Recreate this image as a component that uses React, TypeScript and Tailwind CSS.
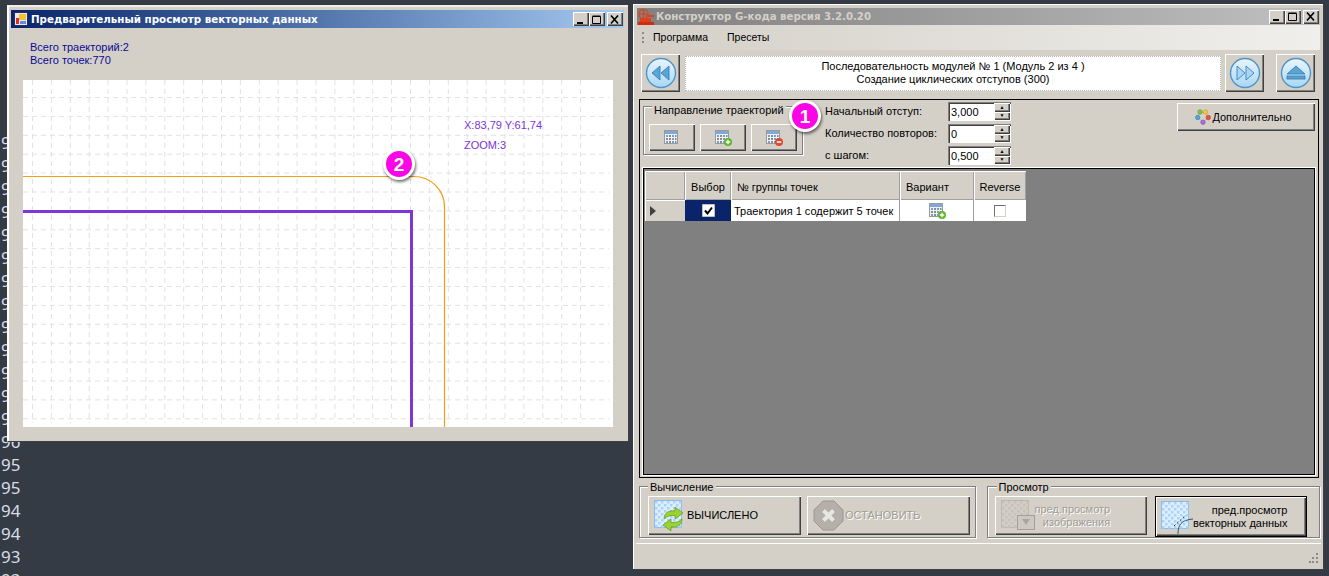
import type { ReactNode } from "react";

const raised =
  "bg-[#d4d0c8] shadow-[inset_1px_1px_0_#ffffff,inset_-1px_-1px_0_#404040,inset_-2px_-2px_0_#808080]";
const uiFont = "font-['Liberation_Sans',Arial,sans-serif] text-[11px] leading-[13px]";

const lineNumbers = ["99", "99", "99", "98", "98", "98", "98", "97", "97", "97", "97", "96", "96", "96", "95", "95", "94", "94", "93", "93", "92"];

function WinButton({ kind }: { kind: "min" | "max" | "close" }) {
  return (
    <div className={`${raised} w-[16px] h-[14px] flex items-center justify-center`}>
      <svg width="10" height="9" viewBox="0 0 10 9">
        {kind === "min" && <rect x="1" y="7" width="6" height="2" fill="#000" />}
        {kind === "max" && <path d="M0.5 1.5h8v7h-8z M0.5 1h8" fill="none" stroke="#000" />}
        {kind === "close" && <path d="M1 0.5l7 8M8 0.5l-7 8" stroke="#000" strokeWidth="1.6" />}
      </svg>
    </div>
  );
}

function WinControls() {
  return (
    <div className="flex items-center mr-[1px]">
      <WinButton kind="min" />
      <WinButton kind="max" />
      <div className="w-[2px]" />
      <WinButton kind="close" />
    </div>
  );
}

function AppIcon() {
  return (
    <svg width="14" height="14" viewBox="0 0 14 14" className="shrink-0">
      <rect x="0.5" y="0.5" width="13" height="13" fill="#e8e8f0" stroke="#23305f" />
      <rect x="2" y="6" width="3" height="6" fill="#d8322a" />
      <rect x="5" y="2" width="7" height="6" fill="#f4c430" />
      <rect x="6" y="9" width="6" height="3" fill="#5b8fd8" />
    </svg>
  );
}

function GcodeIcon() {
  return (
    <svg width="18" height="18" viewBox="0 0 18 18" className="shrink-0">
      <circle cx="6.5" cy="6" r="4.6" fill="none" stroke="#e0401a" strokeWidth="1.1" />
      <path d="M6.5 2v8M2.5 6h8" stroke="#e0401a" strokeWidth="1.2" />
      <rect x="9" y="7" width="8" height="2" fill="#e0401a" />
      <rect x="3" y="10" width="11" height="4" fill="#e0401a" />
      <rect x="1" y="14" width="16" height="3" fill="#c8300f" />
    </svg>
  );
}

function TableIcon({ badge }: { badge?: "plus" | "minus" }) {
  return (
    <svg width="20" height="18" viewBox="0 0 20 18">
      <rect x="2.5" y="1.5" width="13" height="13" fill="#f2f2f2" stroke="#9a9a9a" />
      <rect x="3" y="2" width="12" height="3" fill="#7fa8d8" />
      {[6, 9, 12].map((y) => (
        <g key={y}>
          <rect x="4" y={y} width="2" height="2" fill={y === 9 ? "#8a8a8a" : "#6f9fd8"} />
          <rect x="7" y={y} width="2" height="2" fill="#8a8a8a" />
          <rect x="10" y={y} width="2" height="2" fill="#6f9fd8" />
          <rect x="13" y={y} width="1.5" height="2" fill="#8a8a8a" />
        </g>
      ))}
      {badge === "plus" && (
        <g>
          <circle cx="15" cy="13" r="4" fill="#5fb52a" />
          <path d="M12.8 13h4.4M15 10.8v4.4" stroke="#fff" strokeWidth="1.4" />
        </g>
      )}
      {badge === "minus" && (
        <g>
          <circle cx="15" cy="13" r="4" fill="#e0472e" />
          <path d="M12.8 13h4.4" stroke="#fff" strokeWidth="1.6" />
        </g>
      )}
    </svg>
  );
}

function NavIcon({ kind }: { kind: "back" | "next" | "eject" }) {
  return (
    <svg width="32" height="32" viewBox="0 0 32 32">
      <defs>
        <linearGradient id={`nav-${kind}`} x1="0" y1="0" x2="0" y2="1">
          <stop offset="0" stopColor="#eaf5fd" />
          <stop offset="1" stopColor="#a9d6f5" />
        </linearGradient>
      </defs>
      <circle cx="16" cy="16" r="14.5" fill={`url(#nav-${kind})`} stroke="#4f94c8" strokeWidth="1.4" />
      {kind === "back" && (
        <path d="M15 9v14l-8-7zM24 9v14l-8-7z" fill="#5aa5d8" stroke="#2f78ad" strokeWidth="0.8" />
      )}
      {kind === "next" && (
        <path d="M8 9v14l8-7zM17 9v14l8-7z" fill="#a9d6f5" stroke="#2f78ad" strokeWidth="0.8" />
      )}
      {kind === "eject" && (
        <g fill="#5aa5d8" stroke="#2f78ad" strokeWidth="0.8">
          <path d="M16 9l9 8H7z" />
          <rect x="7" y="19" width="18" height="3" />
        </g>
      )}
    </svg>
  );
}

function DotsIcon() {
  return (
    <svg width="16" height="16" viewBox="0 0 16 16" className="shrink-0">
      <path d="M5 3.5L2.5 8M5 3.5h5M10 3.5l3.5 5M2.5 8l5 5M13.5 8.5L7.5 13" stroke="#b0b0b0" fill="none" />
      <circle cx="5" cy="3" r="2.2" fill="#8bc34a" stroke="#5d8f2a" strokeWidth="0.6" />
      <circle cx="10.5" cy="3" r="2.2" fill="#f2c744" stroke="#c79a1a" strokeWidth="0.6" />
      <circle cx="2.7" cy="8.5" r="2.2" fill="#5aa5e0" stroke="#2f78ad" strokeWidth="0.6" />
      <circle cx="13.3" cy="8.5" r="2.2" fill="#e8543c" stroke="#b23520" strokeWidth="0.6" />
      <circle cx="8" cy="13.2" r="2.2" fill="#a874d8" stroke="#7a48ad" strokeWidth="0.6" />
    </svg>
  );
}

function Checker({ muted, children }: { muted?: boolean; children?: ReactNode }) {
  const a = muted ? "#d2cec7" : "#dceefd";
  const b = muted ? "#c6c2bb" : "#a9d4f8";
  const cells = [1, 4, 7, 10, 13, 16, 19, 22, 25];
  return (
    <svg width="34" height="34" viewBox="0 0 34 34" className="shrink-0 mt-[4px]">
      <rect x="0.5" y="0.5" width="27" height="27" fill={a} stroke={muted ? "#bcb8b0" : "#8cbcec"} />
      {cells.map((y, r) =>
        cells.map((x, c) =>
          (r + c) % 2 === 0 ? <rect key={`${x}-${y}`} x={x} y={y} width="2.5" height="2.5" fill={b} /> : null,
        ),
      )}
      {children}
    </svg>
  );
}

function GroupBox({
  title,
  className,
  legendClass,
  children,
}: {
  title: string;
  className: string;
  legendClass: string;
  children: ReactNode;
}) {
  return (
    <div className={`relative border border-[#808080] shadow-[inset_1px_1px_0_#ffffff,1px_1px_0_#ffffff] ${className}`}>
      <span className={`absolute bg-[#d4d0c8] px-[2px] text-black ${legendClass}`}>{title}</span>
      {children}
    </div>
  );
}

function SpinBox({ value }: { value: string }) {
  return (
    <div className="w-[63px] h-[19px] bg-white flex items-center shadow-[inset_1px_1px_0_#808080,inset_2px_2px_0_#404040,inset_-1px_-1px_0_#ffffff]">
      <span className="flex-1 pl-[3px] pt-[1px] text-[11px] text-black">{value}</span>
      <div className="w-[16px] h-[17px] mr-[1px] flex flex-col">
        <div className={`${raised} flex-1 flex items-center justify-center text-[5px] leading-none text-black`}>▲</div>
        <div className={`${raised} flex-1 flex items-center justify-center text-[5px] leading-none text-black`}>▼</div>
      </div>
    </div>
  );
}

function Badge({ n }: { n: string }) {
  return (
    <div className="w-[32px] h-[32px] rounded-full bg-[#fa05e6] border-[3px] border-white shadow-[1px_2px_3px_rgba(0,0,0,0.55)] flex items-center justify-center text-white font-['Liberation_Sans',sans-serif] font-bold text-[19px] leading-none">
      {n}
    </div>
  );
}

function HeaderCell({ className, children }: { className: string; children?: ReactNode }) {
  return (
    <div className={`${className} h-[29px] pt-[3px] flex items-center bg-[#d4d0c8] shadow-[inset_1px_1px_0_#ffffff,inset_-1px_-1px_0_#a0a0a0] text-black`}>
      {children}
    </div>
  );
}

function PreviewWindow() {
  const xs = Array.from({ length: 30 }, (_, i) => 9.5 + i * 18.9);
  const ys = Array.from({ length: 18 }, (_, i) => 17.5 + i * 18.9);
  return (
    <section className={`absolute left-[7px] top-[5px] w-[621px] h-[436px] flex flex-col p-[4px] bg-[#d4d0c8] border-t-2 border-l-2 border-t-[#eeeeea] border-l-[#ffffff] shadow-[1px_1px_0_#404040] ${uiFont}`}>
      <div className="h-[18px] -mt-[1px] -ml-[2px] flex items-center gap-[3px] pl-[3px] bg-gradient-to-r from-[#0a246a] to-[#a6caf0]">
        <AppIcon />
        <span className="font-['DejaVu_Sans',Verdana,sans-serif] font-bold text-[10.3px] text-white whitespace-nowrap flex-1">
          Предварительный просмотр векторных данных
        </span>
        <WinControls />
      </div>
      <div className="pl-[17px] pt-[13px] text-[#0a0a96] text-[11px] leading-[13px] h-[52px]">
        <div>Всего траекторий:2</div>
        <div>Всего точек:770</div>
      </div>
      <div className="relative ml-[10px] w-[590px] h-[347px] bg-white overflow-hidden">
        <svg width="590" height="347" viewBox="0 0 590 347" className="absolute inset-0">
          {xs.map((x) => (
            <line key={x} x1={x} y1="0" x2={x} y2="343" stroke="#e2e2e2" strokeDasharray="5 4" />
          ))}
          {ys.map((y) => (
            <line key={y} x1="0" y1={y} x2="586" y2={y} stroke="#e2e2e2" strokeDasharray="5 4" />
          ))}
          <path d="M0 96.5H391C408 96.5 421.5 110 421.5 127V347" fill="none" stroke="#f59b14" strokeWidth="1.2" />
          <path d="M0 131.5H388.5V347" fill="none" stroke="#7f35d8" strokeWidth="3" />
        </svg>
        <div className="absolute left-[441px] top-[35px] text-[#7a35e0] text-[11px] leading-[20px] whitespace-nowrap">
          <div>X:83,79 Y:61,74</div>
          <div>ZOOM:3</div>
        </div>
        <div className="absolute left-[360px] top-[68px]">
          <Badge n="2" />
        </div>
      </div>
    </section>
  );
}

function ConstructorWindow() {
  return (
    <section className={`absolute left-[633px] top-[4px] w-[690px] h-[565px] flex flex-col pt-[3px] pl-[3px] pr-[3px] bg-[#d4d0c8] border-t border-l border-white shadow-[1px_1px_0_#404040] ${uiFont}`}>
      <div className="h-[17px] shrink-0 flex items-center gap-[1px] bg-gradient-to-r from-[#808080] to-[#c0c0c0]">
        <GcodeIcon />
        <span className="font-['DejaVu_Sans',Verdana,sans-serif] font-bold text-[10.2px] text-[#d4d0c8] whitespace-nowrap flex-1">
          Конструктор G-кода версия 3.2.0.20
        </span>
        <WinControls />
      </div>

      <div className="h-[25px] shrink-0 flex items-center bg-gradient-to-r from-[#d4d0c8] to-[#f0efec] text-black text-[10.5px]">
        <div className="w-[2px] h-[11px] ml-[5px] border-l-2 border-dotted border-[#8a8a8a]" />
        <span className="ml-[9px]">Программа</span>
        <span className="ml-[19px]">Пресеты</span>
      </div>

      <div className="h-[38px] mt-[4px] shrink-0 flex items-center pl-[4px] text-black">
        <button className={`${raised} w-[39px] h-[38px] flex items-center justify-center`}>
          <NavIcon kind="back" />
        </button>
        <div className="ml-[5px] w-[536px] h-[35px] bg-white border border-dotted border-[#b8b8b8] flex flex-col items-center justify-center text-center">
          <div>Последовательность модулей № 1 (Модуль 2 из 4 )</div>
          <div>Создание циклических отступов (300)</div>
        </div>
        <button className={`${raised} ml-[4px] w-[39px] h-[38px] flex items-center justify-center`}>
          <NavIcon kind="next" />
        </button>
        <button className={`${raised} ml-[12px] w-[39px] h-[38px] flex items-center justify-center`}>
          <NavIcon kind="eject" />
        </button>
      </div>

      <div className="mt-[7px] ml-[2px] w-[680px] h-[379px] shrink-0 border border-black flex flex-col px-[3px]">
        <div className="h-[68px] shrink-0 flex relative text-black">
          <GroupBox
            title="Направление траекторий"
            legendClass="left-[8px] top-[-3px]"
            className="mt-[6px] w-[160px] h-[49px] flex items-end gap-[5px] pl-[5px] pb-[3px]"
          >
            {(["none", "plus", "minus"] as const).map((b) => (
              <button key={b} className={`${raised} w-[46px] h-[27px] flex items-center justify-center`}>
                <TableIcon badge={b === "none" ? undefined : b} />
              </button>
            ))}
          </GroupBox>
          <div className="absolute left-[146px] top-[0px] z-10">
            <Badge n="1" />
          </div>
          <div className="ml-[22px] pt-[2px] flex flex-col gap-[3px]">
            {[
              ["Начальный отступ:", "3,000"],
              ["Количество повторов:", "0"],
              ["с шагом:", "0,500"],
            ].map(([label, value]) => (
              <div key={label} className="flex items-center">
                <span className="w-[123px] text-[11px] whitespace-nowrap">{label}</span>
                <SpinBox value={value} />
              </div>
            ))}
          </div>
          <button className={`${raised} ml-auto mt-[3px] w-[138px] h-[28px] flex items-center justify-center gap-[1px] pr-[5px]`}>
            <DotsIcon />
            <span className="text-[11px]">Дополнительно</span>
          </button>
        </div>

        <div className="h-[307px] shrink-0 bg-[#808080] border border-black shadow-[0_0_0_1px_#ffffff] pt-[2px] pl-[1px] text-black">
          <div className="flex">
            <HeaderCell className="w-[40px]" />
            <HeaderCell className="w-[46px] justify-center">Выбор</HeaderCell>
            <HeaderCell className="w-[169px] pl-[6px]">№ группы точек</HeaderCell>
            <HeaderCell className="w-[74px] pl-[6px]">Вариант</HeaderCell>
            <HeaderCell className="w-[52px] justify-center">Reverse</HeaderCell>
          </div>
          <div className="flex h-[21px] text-[11px]">
            <div className="w-[40px] bg-[#d4d0c8] flex items-center pl-[5px] shadow-[inset_1px_1px_0_#ffffff]">
              <svg width="7" height="10" viewBox="0 0 7 10">
                <path d="M0 0l6 5-6 5z" fill="#404040" />
              </svg>
            </div>
            <div className="w-[46px] bg-[#0a246a] flex items-center justify-center">
              <svg width="13" height="13" viewBox="0 0 13 13">
                <rect width="13" height="13" fill="#ffffff" stroke="#808080" />
                <path d="M3 6.5l2.5 3L10 3.5" fill="none" stroke="#000" strokeWidth="2" />
              </svg>
            </div>
            <div className="w-[169px] bg-white flex items-center pl-[3px] pt-[2px] border-r border-[#a0a0a0] whitespace-nowrap">
              Траектория 1 содержит 5 точек
            </div>
            <div className="w-[74px] bg-white flex items-center justify-center border-r border-[#a0a0a0]">
              <TableIcon badge="plus" />
            </div>
            <div className="w-[52px] bg-white flex items-center justify-center">
              <div className="w-[12px] h-[12px] border border-[#707070] border-r-[#d4d0c8] border-b-[#d4d0c8]" />
            </div>
          </div>
        </div>
      </div>

      <div className="mt-[8px] ml-[2px] flex shrink-0 text-black">
        <GroupBox
          title="Вычисление"
          legendClass="left-[8px] top-[-6px]"
          className="w-[338px] h-[52px] flex gap-[6px] pl-[8px] pt-[9px]"
        >
          <button className={`${raised} w-[153px] h-[39px] flex items-start pl-[6px] text-[11px]`}>
            <Checker>
              <g fill="#9bd32c" stroke="#5f9420" strokeWidth="0.7">
                <path d="M10 19C10 13 15 10 21 11V7L29 13L21 19V15.5C17 15 13 16 10 19z" />
                <path d="M10 19C10 13 15 10 21 11V7L29 13L21 19V15.5C17 15 13 16 10 19z" transform="rotate(180 19 19)" />
              </g>
            </Checker>
            <span className="self-center -ml-[1px]">ВЫЧИСЛЕНО</span>
          </button>
          <button className={`${raised} w-[163px] h-[39px] flex items-center pl-[6px] gap-[1px] text-[11px] text-[#a09c94] [text-shadow:1px_1px_0_#ffffff]`}>
            <svg width="31" height="31" viewBox="0 0 31 31" className="shrink-0">
              <path d="M10 1h11l9 9v11l-9 9H10l-9-9V10z" fill="#b4b0a9" stroke="#9c9890" />
              <path d="M10.5 10.5l10 10M20.5 10.5l-10 10" stroke="#e8e6e1" strokeWidth="4" />
            </svg>
            <span>ОСТАНОВИТЬ</span>
          </button>
        </GroupBox>
        <GroupBox
          title="Просмотр"
          legendClass="left-[9px] top-[-6px]"
          className="ml-[11px] w-[335px] h-[52px] flex gap-[8px] pl-[7px] pt-[9px]"
        >
          <button className={`${raised} w-[152px] h-[39px] flex items-start pl-[6px] text-[#a09c94] [text-shadow:1px_1px_0_#ffffff]`}>
            <Checker muted>
              <rect x="16.5" y="15.5" width="17" height="14" fill="#cdc9c2" stroke="#a4a098" />
              <path d="M21 19h8l-4 6z" fill="#aaa69e" />
            </Checker>
            <div className="self-center flex-1 pr-[37px] text-right text-[11px] whitespace-nowrap">
              <div>пред.просмотр</div>
              <div>изображения</div>
            </div>
          </button>
          <button className={`${raised} w-[152px] h-[41px] flex items-start pl-[5px] border border-black`}>
            <Checker>
              <path d="M17 33C17 24 20 19 32 18" fill="none" stroke="#2f5a6a" strokeWidth="1" />
              <path d="M13 25L25 14" stroke="#222" strokeDasharray="2 2" />
            </Checker>
            <div className="self-center flex-1 pr-[18px] text-right text-[11px] text-black whitespace-nowrap">
              <div>пред.просмотр</div>
              <div className="-ml-[8px]">векторных данных</div>
            </div>
          </button>
        </GroupBox>
      </div>

      <div className="mt-[5px] -mx-[1px] flex-1 border-t border-white relative">
        <svg width="10" height="11" viewBox="0 0 10 11" className="absolute right-[2px] bottom-[5px]">
          <g fill="#8a8a8a">
            <rect x="7" y="0" width="2" height="2" />
            <rect x="7" y="4" width="2" height="2" />
            <rect x="3" y="4" width="2" height="2" />
            <rect x="7" y="8" width="2" height="2" />
            <rect x="3" y="8" width="2" height="2" />
            <rect x="0" y="8" width="2" height="2" />
          </g>
        </svg>
      </div>
    </section>
  );
}

export default function App() {
  return (
    <div className="relative w-[1329px] h-[576px] overflow-hidden bg-[#343b45]">
      <div className="absolute left-[1px] top-[131px] font-['Noto_Sans',sans-serif] text-[17px] leading-[23px] text-[#d6dde4]">
        {lineNumbers.map((n, i) => (
          <div key={i}>{n}</div>
        ))}
      </div>
      <PreviewWindow />
      <ConstructorWindow />
    </div>
  );
}
